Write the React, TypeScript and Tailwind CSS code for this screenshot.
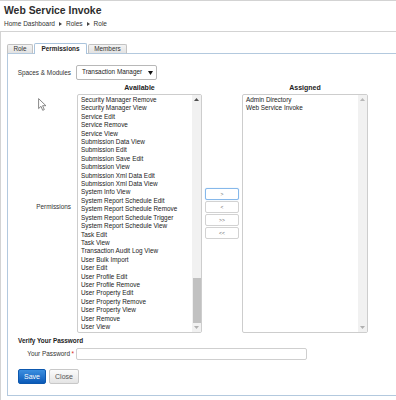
import React from "react";

const AVAILABLE = [
  "Security Manager Remove",
  "Security Manager View",
  "Service Edit",
  "Service Remove",
  "Service View",
  "Submission Data View",
  "Submission Edit",
  "Submission Save Edit",
  "Submission View",
  "Submission Xml Data Edit",
  "Submission Xml Data View",
  "System Info View",
  "System Report Schedule Edit",
  "System Report Schedule Remove",
  "System Report Schedule Trigger",
  "System Report Schedule View",
  "Task Edit",
  "Task View",
  "Transaction Audit Log View",
  "User Bulk Import",
  "User Edit",
  "User Profile Edit",
  "User Profile Remove",
  "User Property Edit",
  "User Property Remove",
  "User Property View",
  "User Remove",
  "User View",
];

const ASSIGNED = ["Admin Directory", "Web Service Invoke"];

function Tri({ dir, color }: { dir: "up" | "down"; color: string }) {
  return (
    <svg width="5" height="3" viewBox="0 0 5 3">
      {dir === "up" ? (
        <path d="M0 3 L2.5 0 L5 3 Z" fill={color} />
      ) : (
        <path d="M0 0 L2.5 3 L5 0 Z" fill={color} />
      )}
    </svg>
  );
}

function ScrollBar({ active }: { active: boolean }) {
  return (
    <div className="w-[9px] h-full flex flex-col bg-[#f1f1f1]">
      <div className="h-[9px] flex items-center justify-center">
        <Tri dir="up" color={active ? "#505050" : "#b8b8b8"} />
      </div>
      <div className="flex-1 flex flex-col justify-end">
        {active && <div className="h-[45px] mx-[0.5px] bg-[#c1c1c1]" />}
      </div>
      <div className="h-[9px] flex items-center justify-center">
        <Tri dir="down" color="#b0b0b0" />
      </div>
    </div>
  );
}

function Crumb() {
  return (
    <svg width="3" height="4" viewBox="0 0 3 4" className="mx-[4px]">
      <path d="M0 0 L3 2 L0 4 Z" fill="#444" />
    </svg>
  );
}

export default function App() {
  return (
    <div className="relative w-[396px] h-[400px] overflow-hidden bg-white font-['Liberation_Sans',Arial,sans-serif] text-[#333]">
      {/* page header */}
      <div className="h-[32px] border-t border-b border-[#d3d3d3] pl-[4px] pt-[3px]">
        <div className="text-[10.4px] leading-[13px] font-bold text-[#2e2e2e]">Web Service Invoke</div>
        <div className="mt-[3px] flex items-center text-[6.5px] leading-[8px] text-[#333]">
          <span>Home Dashboard</span>
          <Crumb />
          <span>Roles</span>
          <Crumb />
          <span>Role</span>
        </div>
      </div>

      {/* content */}
      <div className="border-l border-[#d3d3d3] pl-[6px] pt-[11px] h-[368px]">
        {/* tabs */}
        <div className="relative z-10 -mb-px flex items-end gap-[1px]">
          <div className="h-[10px] w-[26px] border border-[#c2c2c2] border-b-[#b3c9de] rounded-t-[2px] bg-linear-to-b from-[#f3f3f3] to-[#e2e2e2] flex items-center justify-center text-[6.4px] leading-none text-[#333]">
            Role
          </div>
          <div className="h-[11px] w-[53px] border border-b-0 border-[#a9c3dc] rounded-t-[2px] bg-white flex items-center justify-center text-[6.4px] leading-none font-bold text-[#222]">
            Permissions
          </div>
          <div className="h-[10px] w-[39px] border border-[#c2c2c2] border-b-[#b3c9de] rounded-t-[2px] bg-linear-to-b from-[#f3f3f3] to-[#e2e2e2] flex items-center justify-center text-[6.4px] leading-none text-[#333]">
            Members
          </div>
        </div>

        {/* panel */}
        <div className="w-[420px] border border-[#b3c9de] pl-[10px] pt-[11px] pb-[11px]">
          {/* spaces & modules */}
          <div className="flex items-center">
            <div className="w-[53px] flex justify-end whitespace-nowrap text-[6.4px] leading-[8px]">Spaces &amp; Modules</div>
            <div className="ml-[5px] w-[81px] h-[15px] border border-[#b8b8b8] rounded-[2px] bg-white flex items-center justify-between pl-[5px] pr-[3px] text-[6.4px] leading-none text-[#222]">
              <span className="whitespace-nowrap">Transaction Manager</span>
              <svg width="5" height="4" viewBox="0 0 5 4">
                <path d="M0 0 L5 0 L2.5 4 Z" fill="#111" />
              </svg>
            </div>
          </div>

          {/* permissions */}
          <div className="mt-[1px] flex">
            <div className="w-[53px] flex items-center justify-end whitespace-nowrap text-[6.4px] leading-[8px]">Permissions</div>
            <div className="ml-[6px] flex flex-col">
              <div className="h-[13px] flex items-center text-[7px] leading-none font-bold text-[#222]">
                <div className="w-[125px] text-center">Available</div>
                <div className="w-[40px]" />
                <div className="w-[126px] text-center">Assigned</div>
              </div>
              <div className="flex h-[239px] gap-[3px]">
                <div className="w-[125px] h-full border border-[#cdcdcd] rounded-[2px] flex overflow-hidden bg-white">
                  <div className="flex-1 overflow-hidden pl-[3px] pt-[1px]">
                    {AVAILABLE.map((a) => (
                      <div key={a} className="text-[6.4px] leading-[8.4px] whitespace-nowrap text-[#222]">
                        {a}
                      </div>
                    ))}
                  </div>
                  <ScrollBar active />
                </div>

                <div className="w-[34px] flex flex-col justify-center gap-[1px]">
                  {[">", "<", ">>", "<<"].map((t, i) => (
                    <div
                      key={t}
                      className={
                        i === 0
                          ? "h-[12px] border border-[#86b8ea] rounded-[2px] bg-white flex items-center justify-center text-[5px] leading-none text-[#666] shadow-[0_0_1px_#9cc6f0]"
                          : "h-[12px] border border-[#d2d2d2] rounded-[2px] bg-white flex items-center justify-center text-[5px] leading-none text-[#666]"
                      }
                    >
                      {t}
                    </div>
                  ))}
                </div>

                <div className="w-[126px] h-full border border-[#cdcdcd] rounded-[2px] flex overflow-hidden bg-white">
                  <div className="flex-1 overflow-hidden pl-[3px] pt-[1px]">
                    {ASSIGNED.map((a) => (
                      <div key={a} className="text-[6.4px] leading-[8.4px] whitespace-nowrap text-[#222]">
                        {a}
                      </div>
                    ))}
                  </div>
                  <ScrollBar active={false} />
                </div>
              </div>
            </div>
          </div>

          {/* verify password */}
          <div className="mt-[4px] text-[6.4px] leading-[8px] font-bold text-[#222]">Verify Your Password</div>
          <div className="mt-[3px] flex items-center">
            <div className="w-[56px] flex justify-end whitespace-nowrap text-[6.4px] leading-[8px]">
              Your Password<span className="ml-[1.5px] text-[#d81b1b]">*</span>
            </div>
            <div className="ml-[2px] w-[231px] h-[12px] border border-[#cfcfcf] rounded-[2px] bg-white" />
          </div>

          {/* buttons */}
          <div className="mt-[9px] flex gap-[3px]">
            <div className="w-[28px] h-[15px] rounded-[2px] border border-[#0d58ae] bg-linear-to-b from-[#3b8fe0] to-[#0a5ab8] flex items-center justify-center text-[7px] leading-none text-white">
              Save
            </div>
            <div className="w-[30px] h-[15px] rounded-[2px] border border-[#c8c8c8] bg-linear-to-b from-[#fbfbfb] to-[#e4e4e4] flex items-center justify-center text-[7px] leading-none text-[#555]">
              Close
            </div>
          </div>
        </div>
      </div>

      {/* mouse cursor overlay */}
      <svg className="absolute left-[38px] top-[98px]" width="9" height="14" viewBox="0 0 9 14">
        <path
          d="M0.6 0.6 L0.6 10.6 L3 8.3 L4.7 12.3 L6.3 11.6 L4.6 7.7 L7.9 7.7 Z"
          fill="#fff"
          stroke="#6a6a6a"
          strokeWidth="0.8"
          strokeLinejoin="round"
        />
      </svg>
    </div>
  );
}
